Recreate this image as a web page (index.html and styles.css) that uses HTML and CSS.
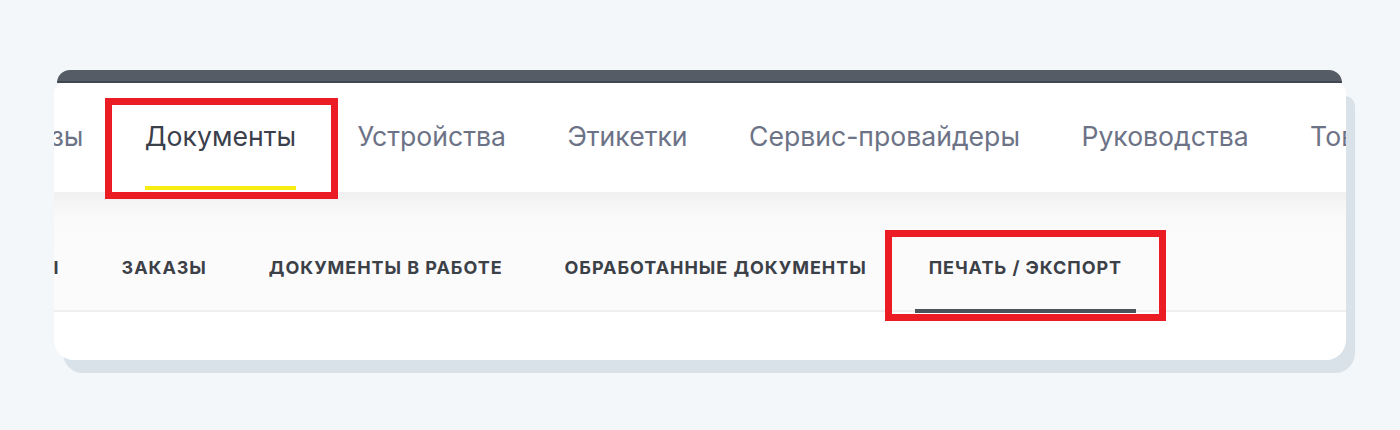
FILE: index.html
```html
<!DOCTYPE html>
<html lang="ru">
<head>
<meta charset="utf-8">
<title>Документы — Печать / Экспорт</title>
<link rel="stylesheet" href="styles.css">
</head>
<body>
<div class="frame">
  <div class="topbar"></div>
  <div class="card">
    <nav class="topnav">
      <a class="tab">Заказы</a>
      <a class="tab active">Документы</a>
      <a class="tab">Устройства</a>
      <a class="tab">Этикетки</a>
      <a class="tab">Сервис-провайдеры</a>
      <a class="tab">Руководства</a>
      <a class="tab">Товары</a>
    </nav>
    <nav class="subnav">
      <a class="subtab">Товары</a>
      <a class="subtab">Заказы</a>
      <a class="subtab">Документы в работе</a>
      <a class="subtab">Обработанные документы</a>
      <a class="subtab active">Печать / Экспорт</a>
    </nav>
    <div class="content"></div>
  </div>
  <div class="mark mark-top"></div>
  <div class="mark mark-sub"></div>
</div>
</body>
</html>
```

FILE: styles.css
```css
html, body {
  margin: 0;
  padding: 0;
}
body {
  background: #f4f7fa;
  font-family: Inter, "Noto Sans", "DejaVu Sans", sans-serif;
  width: 1400px;
  height: 430px;
  overflow: hidden;
}
.frame {
  position: relative;
  margin: 70px 0 0 54px;
  width: 1292px;
}
.topbar {
  height: 11px;
  margin: 0 4px 0 3px;
  background: #555c66;
  border-bottom: 2px solid #404751;
  border-radius: 22px 22px 0 0;
}
.card {
  background: #ffffff;
  border-radius: 10px 10px 20px 20px;
  overflow: hidden;
  box-shadow: 9px 13px 0 #d9e1e9;
}
.topnav {
  display: flex;
  gap: 61.4px;
  height: 109px;
  margin-left: -64px;
  white-space: nowrap;
}
.tab {
  display: flex;
  align-items: center;
  font-size: 26.6px;
  color: #6d7387;
  border-bottom: 4px solid transparent;
  margin-bottom: 2px;
  box-sizing: border-box;
  padding-top: 2px;
}
.tab.active {
  color: #3b404c;
  border-bottom-color: #f6ee10;
}
.subnav {
  display: flex;
  gap: 34px;
  height: 120px;
  box-sizing: border-box;
  border-bottom: 2px solid #eeeff1;
  background: linear-gradient(#f0f0f1 0, #f9f9fa 22px, #fbfbfc 60px);
  margin-left: -93px;
  white-space: nowrap;
}
.subtab {
  display: flex;
  align-items: center;
  padding: 33px 14px 0;
  margin-bottom: -3px;
  border-bottom: 4px solid transparent;
  font-size: 18px;
  font-weight: 700;
  letter-spacing: 0.95px;
  text-transform: uppercase;
  color: #3c4047;
}
.subtab.active {
  border-bottom-color: #4b535a;
}
.content {
  height: 48px;
}
.mark {
  position: absolute;
  border: 7px solid #ec1c24;
  box-sizing: border-box;
}
.mark-top {
  left: 51px;
  top: 28px;
  width: 233px;
  height: 101px;
}
.mark-sub {
  left: 831px;
  top: 160px;
  width: 281px;
  height: 91px;
}
```
